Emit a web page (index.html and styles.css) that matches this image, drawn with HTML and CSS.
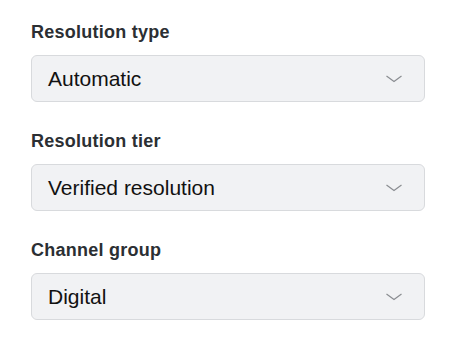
FILE: index.html
```html
<!DOCTYPE html>
<html lang="en">
<head>
    <meta charset="UTF-8">
    <meta name="viewport" content="width=device-width, initial-scale=1.0">
    <title>Resolution settings</title>
    <link rel="stylesheet" href="styles.css">
</head>
<body>
    <div class="form">
        <div class="field">
            <label class="field-label">Resolution type</label>
            <div class="select">
                <span>Automatic</span>
                <svg class="chevron" width="16" height="8" viewBox="0 0 16 8"><path d="M0.5 1 L8 6.6 L15.5 1" /></svg>
            </div>
        </div>
        <div class="field">
            <label class="field-label">Resolution tier</label>
            <div class="select">
                <span>Verified resolution</span>
                <svg class="chevron" width="16" height="8" viewBox="0 0 16 8"><path d="M0.5 1 L8 6.6 L15.5 1" /></svg>
            </div>
        </div>
        <div class="field">
            <label class="field-label">Channel group</label>
            <div class="select">
                <span>Digital</span>
                <svg class="chevron" width="16" height="8" viewBox="0 0 16 8"><path d="M0.5 1 L8 6.6 L15.5 1" /></svg>
            </div>
        </div>
    </div>
</body>
</html>
```
FILE: styles.css
```css
body {
    margin: 0;
    background-color: #ffffff;
    font-family: 'Liberation Sans', Arial, sans-serif;
}

.form {
    padding: 21px 25px 0 31px;
    display: flex;
    flex-direction: column;
    gap: 28px;
}

.field-label {
    display: block;
    font-size: 18px;
    line-height: 22px;
    font-weight: bold;
    letter-spacing: 0.25px;
    color: #2b2f33;
    margin-bottom: 12px;
}

.select {
    height: 47px;
    box-sizing: border-box;
    display: flex;
    align-items: center;
    justify-content: space-between;
    padding: 0 22px 0 16px;
    background-color: #f1f2f4;
    border: 1px solid #d8dadd;
    border-radius: 6px;
    font-size: 21px;
    color: #111111;
}

.chevron {
    fill: none;
    stroke: #8a8d91;
    stroke-width: 1.2;
}
```
